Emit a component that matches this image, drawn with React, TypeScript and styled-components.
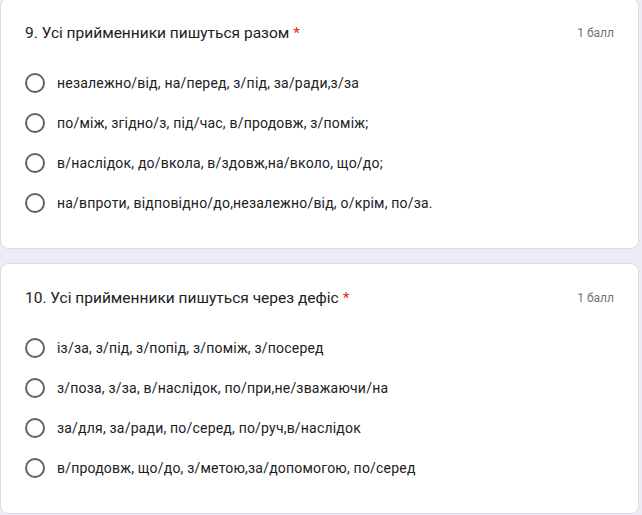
import React from 'react'
import styled, { createGlobalStyle } from 'styled-components'

const GlobalStyle = createGlobalStyle`
  body {
    margin: 0;
    background: #f0ebf8;
    font-family: Roboto, "Liberation Sans", Arial, sans-serif;
  }
`;

const Page = styled.div`
  display: flex;
  flex-direction: column;
  gap: 14px;
  width: 639px;
  margin-top: -2px;
`;

const Card = styled.section`
  background: #ffffff;
  border: 1px solid #dadce0;
  border-radius: 8px;
  padding: 22px 24px 25px 24px;
  box-sizing: border-box;
`;

const Header = styled.div`
  display: flex;
  justify-content: space-between;
  align-items: center;
  height: 24px;
  margin-bottom: 18px;
`;

const Title = styled.div`
  font-size: 15.5px;
  color: #202124;
`;

const Required = styled.span`
  color: #d93025;
  margin-left: 4px;
`;

const Points = styled.span`
  font-size: 12px;
  color: #70757a;
`;

const Options = styled.div`
  display: flex;
  flex-direction: column;
`;

const Option = styled.label`
  display: flex;
  align-items: center;
  height: 40px;
  gap: 12px;
  font-size: 14px;
  color: #202124;
  letter-spacing: 0.2px;
  cursor: pointer;
`;

const Radio = styled.span`
  width: 20px;
  height: 20px;
  border: 2px solid #5f6368;
  border-radius: 50%;
  box-sizing: border-box;
  flex-shrink: 0;
`;

interface IQuestion {
  title: string
  options: string[]
}

const questions: IQuestion[] = [
  {
    title: '9. Усі прийменники пишуться разом',
    options: [
      'незалежно/від, на/перед, з/під, за/ради,з/за',
      'по/між, згідно/з, під/час, в/продовж, з/поміж;',
      'в/наслідок, до/вкола, в/здовж,на/вколо, що/до;',
      'на/впроти, відповідно/до,незалежно/від, о/крім, по/за.'
    ]
  },
  {
    title: '10. Усі прийменники пишуться через дефіс',
    options: [
      'із/за, з/під, з/попід, з/поміж, з/посеред',
      'з/поза, з/за, в/наслідок, по/при,не/зважаючи/на',
      'за/для, за/ради, по/серед, по/руч,в/наслідок',
      'в/продовж, що/до, з/метою,за/допомогою, по/серед'
    ]
  }
];

const Question: React.FC<{ question: IQuestion }> = ({ question }) => (
  <Card>
    <Header>
      <Title>
        {question.title}
        <Required>*</Required>
      </Title>
      <Points>1 балл</Points>
    </Header>
    <Options>
      {question.options.map(option => (
        <Option key={option}>
          <Radio />
          <span>{option}</span>
        </Option>
      ))}
    </Options>
  </Card>
);

const App: React.FC = () => (
  <>
    <GlobalStyle />
    <Page>
      {questions.map(q => (
        <Question key={q.title} question={q} />
      ))}
    </Page>
  </>
);

export default App
